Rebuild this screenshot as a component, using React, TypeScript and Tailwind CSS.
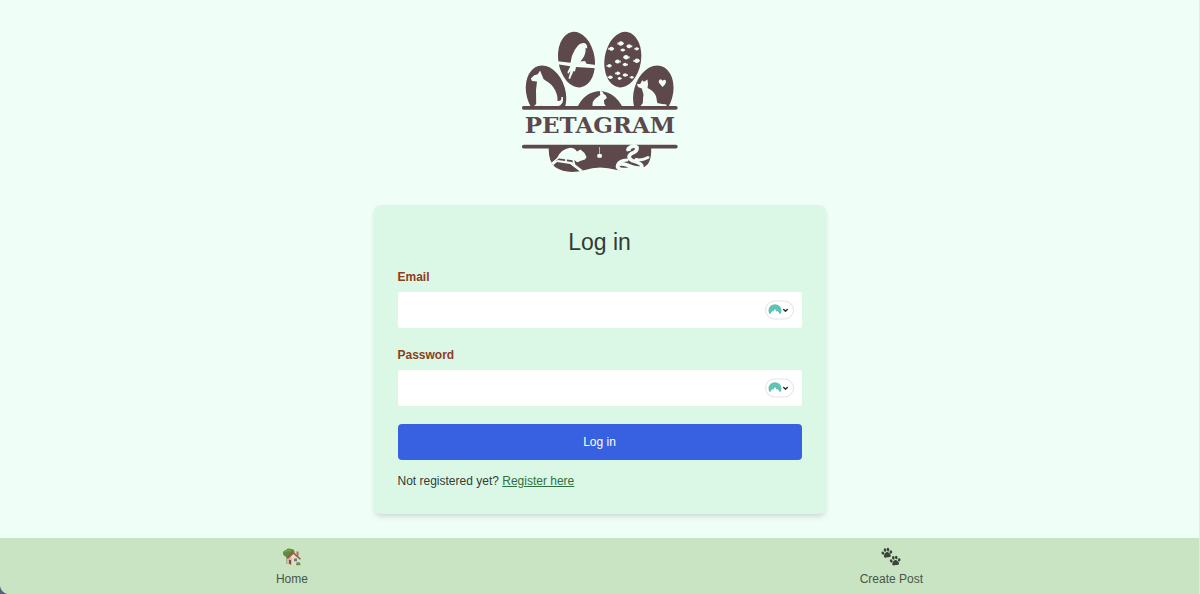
import React, { useId } from "react";

const FISH: [number, number, number, boolean][] = [
  [621, 43.5, 1.1, false],
  [611.5, 48.8, 1, false],
  [622.5, 50, 0.8, true],
  [629, 46.3, 1, true],
  [637, 48.8, 0.8, false],
  [626, 57.3, 1.1, true],
  [637, 60.8, 1.1, false],
  [617.5, 61.5, 1, true],
  [609.5, 65.8, 0.9, false],
  [625, 64.5, 0.9, true],
  [618, 73.3, 0.9, false],
  [625, 75, 0.9, true],
  [610.5, 77.2, 0.9, false],
  [619.5, 78.5, 0.7, true],
  [632, 77.3, 0.7, false],
];

function Logo() {
  return (
    <svg
      viewBox="520 30 160 145"
      role="img"
      aria-label="Petagram"
      className="h-[145px] w-[160px]"
    >
      <defs>
        <clipPath id="toes">
          <rect x="520" y="30" width="160" height="78" />
        </clipPath>
        <clipPath id="pad">
          <path d="M548.8 147H651Q652 157 648 164Q640 173 617 170Q599 165 585 170Q567 175 555 167Q548 161 548.8 147Z" />
        </clipPath>
      </defs>
      <g clipPath="url(#toes)" fill="#5d484b">
        <ellipse cx="576.5" cy="59.6" rx="18.2" ry="28" transform="rotate(-9 576.5 59.6)" />
        <ellipse cx="622.8" cy="59.6" rx="18.2" ry="28" transform="rotate(9 622.8 59.6)" />
        <ellipse cx="546" cy="93" rx="19.5" ry="28" transform="rotate(-16 546 93)" />
        <ellipse cx="653.3" cy="93" rx="19.5" ry="28" transform="rotate(16 653.3 93)" />
        <path d="M577 108Q584 92 600 91Q615 92 623 108Z" />
      </g>
      <g fill="#f1fef8">
        <path d="M557.5 61.2L570.5 62.8Q571 56 575 49.5L578 45.5Q580 42.7 584 43Q587.5 43.5 587.2 48.5L585.6 47.8Q586 54 583 58L580.5 61.5L585 61L586.5 63.8L596 65V68.2L576 67L575 71.5L573.5 71L570 79L568.5 78.5L570.5 71L568 74L567.5 72L570.3 66.2L557.5 64.2Z" />
        <path d="M530.8 78.5L534.3 75.2L537.8 74.2L540 70.5L542.3 76Q542.8 79 545.5 80.5Q552 84 555 90Q558 96 557.5 101Q562 101.5 561.3 97L563 97Q564 105 557.5 106.5H542L541 105.5L539.8 106.5H533.5L536.2 104L536 90L537 81.5L532 81Z" />
        <path d="M600.3 95L599.8 91Q602.5 90.5 603.8 94Q606.5 95 606.8 98L604 100.2L604.2 103.5L606 106.5H592.5Q591.8 101.5 595.5 98.5Q598 96.5 600.3 95Z" />
        <path d="M637 84L640.2 84L642.2 80.2L644 81.8L647.5 79.5L648 84.5L647.5 88Q653.5 90.5 656 96L657.3 103Q662 104 666.5 104.5V106H640.5L642.8 103Q643 98 643.5 94.5L641.8 88.5L638 87Z" />
        <path d="M662.5 87L658.8 82.5Q658.5 79.5 661 79.3L662.5 80.7Q665.8 78.5 666 81.5Q666 84 662.5 87Z" />
        {FISH.map(([x, y, s, flip]) => (
          <path
            key={`${x}-${y}`}
            d="M-2.8 0Q-1.5-2.2 .4-2Q1.8-1.8 2.1-.6L3.2-1.2V1.2L2 .8Q1.4 2.2 0 2Q-1.8 1.8-2.8 0Z"
            transform={`translate(${x} ${y}) scale(${flip ? s : -s} ${s})`}
          />
        ))}
      </g>
      <g stroke="#5d484b" strokeWidth="3.8" strokeLinecap="round">
        <path d="M523.8 107.8H675.8M523.8 146.6H675.8" />
      </g>
      <text
        x="600"
        y="133"
        textAnchor="middle"
        fill="#5d484b"
        className="font-['DejaVu_Serif',serif] text-[23px] font-bold"
      >
        PETAGRAM
      </text>
      <g clipPath="url(#pad)">
        <rect x="545" y="146" width="110" height="30" fill="#5d484b" />
        <g fill="#f1fef8">
          <path d="M550 164L557 158Q561 149 570 147.7Q575 148 577 151.5L580.5 149.5L584.5 153L586.5 157L585 159.5L580 161Q577.5 163.5 575 160.5L559 158.5L552.5 163.5Z" />
          <path d="M550 163L558 160L572 162L585 172L582 173L570 164L557 162L550 168Z" />
          <path d="M566 158V163M573 159L574.5 165" stroke="#f1fef8" strokeWidth="1.8" />
          <rect x="597.3" y="154" width="4.6" height="3.8" rx="1" />
        </g>
        <path d="M599.5 146V154" stroke="#f1fef8" strokeWidth="0.6" />
      </g>
      <g fill="none" stroke="#f1fef8" strokeLinecap="round">
        <path d="M628.5 148.5Q634 144 637 147.5Q637.5 151.5 631.5 153.5Q626.5 157 632 160.5Q643 163.5 642 167.5Q637 169.5 627 165Q619 162 617.5 166.5Q618 170 628 169.7H641Q648 169.5 650 165" strokeWidth="3.8" />
        <path d="M617.5 165Q619 160.5 627 160M636 159.5Q641 161 648 157.5" strokeWidth="3" />
      </g>
      <path d="M630 147L625.8 149.5L627 151.5L631 150.5Z" fill="#f1fef8" />
    </svg>
  );
}

function FillBadge({ label }: { label: string }) {
  return (
    <button
      type="button"
      aria-label={label}
      className="absolute top-1/2 right-2 flex h-[19px] w-[29px] -translate-y-1/2 items-center justify-center rounded-full border border-[#e6e1e7] bg-white"
    >
      <svg viewBox="0 0 22 13" className="h-[13px] w-[22px]" aria-hidden="true">
        <path
          d="M1.9 11Q.2 9 .5 6.3Q1.6 1 7 .8Q12.4 1 13.5 6.3Q13.8 9 12.1 11L9.6 7.4L8.7 8.3L7 5.4L5.2 8.3L4.3 7.4Z"
          fill="#5fc4b4"
        />
        <path d="M15.7 6L17.5 7.6L19.3 6" fill="none" stroke="#333" strokeWidth="1.5" strokeLinecap="round" strokeLinejoin="round" />
      </svg>
    </button>
  );
}

function Field({ label, type }: { label: string; type: string }) {
  const id = useId();
  return (
    <div className="mb-[18px]">
      <label htmlFor={id} className="mb-1.5 block text-[12px] leading-[18px] font-bold text-[#8c3e20]">
        {label}
      </label>
      <div className="relative">
        <input
          id={id}
          type={type}
          className="block h-9 w-full rounded-xs bg-white px-3 pr-10 text-[12px] outline-none focus:ring-1 focus:ring-green-600"
        />
        <FillBadge label={`Fill in ${label.toLowerCase()}`} />
      </div>
    </div>
  );
}

function HouseIcon() {
  return (
    <svg viewBox="0 0 20 20" className="h-5 w-5" aria-hidden="true">
      <path d="M4.5 9H6.5V17H4.7Z" fill="#80593a" />
      <path d="M1 6.5Q.8 3.5 4 3Q6 .8 9 2Q13 2 12.5 6Q11 10 6 9.7Q1.5 10 1 6.5Z" fill="#5e8b3c" />
      <path d="M3 5Q6 2.5 9 4" stroke="#7ba650" strokeWidth="1.2" fill="none" />
      <path d="M14.5 4.5H16.5V9H14.5Z" fill="#a86e50" />
      <path d="M5 10.5L11.5 5L18 11V18L10 18.5L5 16.5Z" fill="#e9dcc7" />
      <path d="M5 10.5L8 8L10 12V18.5L5 16.5Z" fill="#cdbda8" />
      <path d="M4 10.5L10.5 4L19 11.7L17.8 12.7L11.4 7L6 12Z" fill="#985d48" />
      <path d="M7 13H9V17.5L7 16.8Z" fill="#805039" />
      <path d="M12 11.5H15V14.3H12Z" fill="#617c86" />
      <path d="M14 17Q14.5 14.5 16.5 15Q18.5 15 18.5 18.3H14Z" fill="#719553" />
    </svg>
  );
}

function Paw({ transform }: { transform: string }) {
  return (
    <g transform={transform}>
      <ellipse cx="-4" cy="-.6" rx="1.3" ry="1.7" transform="rotate(-25 -4 -.6)" />
      <ellipse cx="-1.5" cy="-3.4" rx="1.3" ry="1.8" />
      <ellipse cx="1.5" cy="-3.4" rx="1.3" ry="1.8" />
      <ellipse cx="4" cy="-.6" rx="1.3" ry="1.7" transform="rotate(25 4 -.6)" />
      <path d="M0-1.1C1.7-1.1 3.7 1.8 3.4 3.3C2.9 4.8 1 4 0 4S-2.9 4.8-3.4 3.3C-3.7 1.8-1.7-1.1 0-1.1Z" />
    </g>
  );
}

function PawsIcon() {
  return (
    <svg viewBox="0 0 20 20" className="h-5 w-5" fill="#3b443b" aria-hidden="true">
      <Paw transform="translate(6 6.2) rotate(-8)" />
      <Paw transform="translate(14.3 14) rotate(-8)" />
    </svg>
  );
}

function NavItem({ label, children }: { label: string; children: React.ReactNode }) {
  return (
    <a href="#" className="flex flex-col items-center gap-[3px] text-[12px] leading-[18px] text-[#4a554a]">
      {children}
      {label}
    </a>
  );
}

export default function App() {
  return (
    <div className="relative flex min-h-screen flex-col border-r border-[#e3ebe6] bg-[#f0fef8] font-['Liberation_Sans',Arial,sans-serif] text-[#333b35]">
      <header className="flex justify-center pt-[30px] pb-[30px]">
        <Logo />
      </header>
      <main className="flex flex-1 justify-center px-4 pb-6">
        <section className="w-full max-w-[452px] self-start rounded-md bg-[#dbf8e6] p-6 shadow-md">
          <h1 className="mb-[13px] text-center text-[23px] leading-[26px]">Log in</h1>
          <form onSubmit={(e) => e.preventDefault()}>
            <Field label="Email" type="email" />
            <Field label="Password" type="password" />
            <button
              type="submit"
              className="h-9 w-full rounded bg-[#3861e1] text-[12px] text-white"
            >
              Log in
            </button>
          </form>
          <p className="mt-3 text-[12px] leading-[18px]">
            Not registered yet?{" "}
            <a href="#" className="text-[#2f7040] underline">
              Register here
            </a>
          </p>
        </section>
      </main>
      <nav className="flex justify-around bg-[#c8e4c3] pt-[9px] pb-[6px]">
        <NavItem label="Home">
          <HouseIcon />
        </NavItem>
        <NavItem label="Create Post">
          <PawsIcon />
        </NavItem>
      </nav>
      <svg viewBox="0 0 8 8" className="absolute bottom-0 left-0 h-2 w-2" aria-hidden="true">
        <path d="M0 0Q1 6 7 8H0Z" fill="#56617c" />
      </svg>
    </div>
  );
}
